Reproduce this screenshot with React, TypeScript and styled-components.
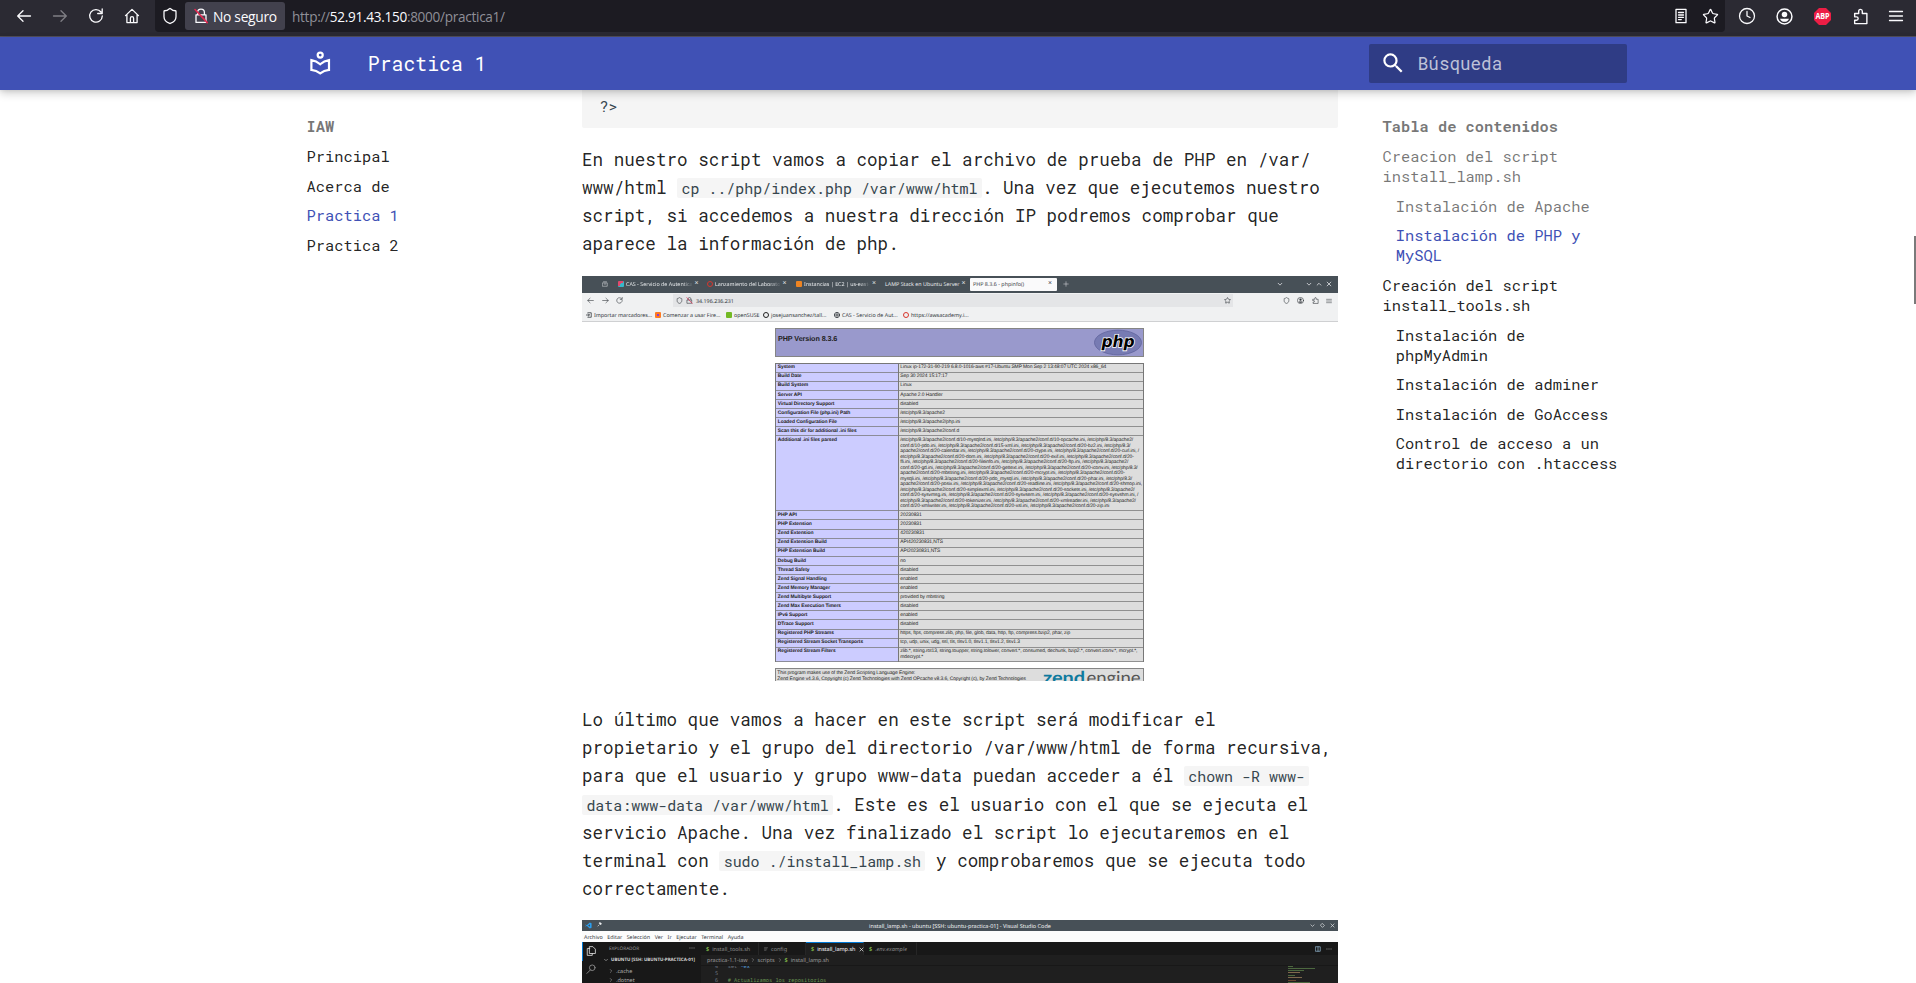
import React from "react";
import styled, { createGlobalStyle, css } from "styled-components";
import { Shield, Star, Clock } from "lucide-react";

const mono = `"Roboto Mono", "DejaVu Sans Mono", "Liberation Mono", monospace`;
const ui = `"Open Sans", "Noto Sans", sans-serif`;

const Global = createGlobalStyle`
  * { box-sizing: border-box; }
  body { margin: 0; background: #fff; color: rgba(0,0,0,.87); font-family: ${mono}; overflow: hidden; }
  svg { display: block; flex: none; }
  h1, h2, p, ul { margin: 0; padding: 0; font-weight: 400; }
  ul { list-style: none; }
`;

const Page = styled.div`
  display: flex;
  flex-direction: column;
  height: 983px;
  overflow: hidden;
`;

/* Browser chrome */
const BrowserBar = styled.div`
  display: flex;
  flex: none;
  height: 37px;
  background: #2b2a33;
  border-bottom: 1px solid #53515d;
  color: #fbfbfe;
  font-family: ${ui};
`;
const NavButtons = styled.div`
  display: flex;
  width: 155px;
  height: 27px;
  padding-left: 6px;
`;
const BarIcon = styled.span<{ $w?: number; $dim?: boolean }>`
  display: flex;
  align-items: center;
  justify-content: center;
  width: ${(p) => p.$w ?? 36}px;
  height: 27px;
  margin-top: 2.5px;
  opacity: ${(p) => (p.$dim ? 0.4 : 1)};
`;
const UrlBox = styled.div`
  display: flex;
  width: 1570px;
  height: 32px;
  background: #1c1b22;
  border-radius: 0 0 4px 4px;
`;
const Chip = styled.span`
  display: flex;
  align-items: center;
  gap: 4px;
  width: 100px;
  height: 28px;
  margin-top: 2px;
  padding-left: 8px;
  background: #42414d;
  border-radius: 3px;
  font-size: 13.8px;
  letter-spacing: -0.3px;
  white-space: nowrap;
`;
const Url = styled.span`
  flex: 1;
  padding: 2px 0 0 7px;
  font-size: 13.6px;
  line-height: 30px;
  letter-spacing: -0.3px;
  color: #8f8f97;
  b { font-weight: 400; color: #fbfbfe; }
`;
const BarRight = styled.div`
  display: flex;
  padding-left: 4px;
`;

/* Site header */
const Header = styled.header`
  position: relative;
  z-index: 2;
  display: flex;
  flex: none;
  align-items: center;
  height: 53px;
  padding-left: 307px;
  background: #4051b5;
  color: #fff;
  box-shadow: 0 0 4.4px rgba(0,0,0,.1), 0 4.4px 8.8px rgba(0,0,0,.2);
`;
const Title = styled.h1`
  width: 1001.6px;
  margin-left: 34.4px;
  padding-bottom: 2px;
  font-size: 19.8px;
`;
const Search = styled.div`
  display: flex;
  align-items: center;
  gap: 11px;
  width: 258px;
  height: 39px;
  padding-left: 11px;
  border-radius: 2px;
  background: #2f3c85;
  color: rgba(255,255,255,.7);
  font-size: 17.6px;
`;

/* Columns */
const Columns = styled.div`
  display: flex;
  flex: 1;
  min-height: 0;
  overflow: hidden;
`;
const Nav = styled.nav<{ $w: number; $left: number }>`
  flex: none;
  width: ${(p) => p.$w}px;
  padding: 26.4px 0 0 ${(p) => p.$left}px;
  font-size: 15.4px;
  line-height: 20.02px;
`;
const NavTitle = styled.h2`
  font-size: 15.4px;
  font-weight: 700;
  color: rgba(0,0,0,.54);
`;
const NavItem = styled.li<{ $tone?: "active" | "passed"; $nested?: boolean }>`
  margin-top: 9.62px;
  padding-left: ${(p) => (p.$nested ? 13.2 : 0)}px;
  white-space: pre-line;
  color: ${(p) => (p.$tone === "active" ? "#4051b5" : p.$tone === "passed" ? "rgba(0,0,0,.54)" : "inherit")};
`;
const Article = styled.article`
  flex: none;
  width: 756px;
  font-size: 17.6px;
  line-height: 28.16px;
`;
const CodeBlock = styled.pre`
  height: 38.2px;
  margin: 0;
  padding: 6px 0 0 17.6px;
  border-radius: 0 0 2px 2px;
  background: #f5f5f5;
  color: #36464e;
  font-family: ${mono};
  font-size: 14.96px;
  line-height: 21px;
`;
const Paragraph = styled.p`
  margin: 17.6px 0;
  white-space: pre;
`;
const Code = styled.code`
  padding: 0 4.4px;
  border-radius: 2px;
  background: #f5f5f5;
  color: #36464e;
  font-family: ${mono};
  font-size: 14.96px;
`;
const ScrollThumb = styled.div`
  width: 2px;
  height: 68px;
  margin: 146px 0 0 auto;
  background: #7a7a7a;
`;

/* Firefox capture */
const Shot = styled.figure<{ $h: number; $gap?: number }>`
  display: flex;
  flex-direction: column;
  width: 756px;
  height: ${(p) => p.$h}px;
  margin: -0.4px 0 ${(p) => p.$gap ?? 0}px;
  overflow: hidden;
  font-family: "Noto Sans", sans-serif;
  font-size: 5.35px;
  line-height: 8px;
  text-rendering: geometricPrecision;
  color: #2e3338;
  white-space: nowrap;
`;
const TabStrip = styled.div`
  display: flex;
  flex: none;
  height: 17px;
  background: #475057;
  color: #e8eaec;
`;
const Tab = styled.div<{ $w: number; $on?: boolean; $px?: number }>`
  display: flex;
  flex: none;
  align-items: center;
  gap: 2px;
  width: ${(p) => p.$w}px;
  height: ${(p) => (p.$on ? 13 : 17)}px;
  margin-top: ${(p) => (p.$on ? 2 : 0)}px;
  padding: 0 5px 0 ${(p) => p.$px ?? 4}px;
  border-radius: 1px;
  ${(p) => p.$on && css`background: #fafafb; color: #3b4045;`}
  i { margin-left: auto; font-style: normal; font-size: 7px; }
`;
const TabText = styled.span<{ $fade?: boolean }>`
  ${(p) => p.$fade && css`mask-image: linear-gradient(90deg, #000 84%, transparent);`}
`;
const Pip = styled.span<{ $c: string; $ring?: boolean }>`
  flex: none;
  width: 6px;
  height: 6px;
  border-radius: ${(p) => (p.$ring ? "50%" : "1px")};
  ${(p) => (p.$ring ? css`border: 1px solid ${p.$c};` : css`background: ${p.$c};`)}
`;
const FoxRow = styled.div<{ $h: number }>`
  display: flex;
  flex: none;
  align-items: center;
  height: ${(p) => p.$h}px;
  background: #f0f1f2;
`;
const FoxNav = styled.span`
  display: flex;
  gap: 7.5px;
  width: 91px;
  padding-left: 5px;
`;
const FoxTools = styled.span`
  display: flex;
  align-items: center;
  gap: 7.3px;
  padding-left: 50px;
`;
const Address = styled.div`
  display: flex;
  align-items: center;
  gap: 3px;
  width: 560px;
  height: 13px;
  padding: 0 2.5px 0 3px;
  background: #e4e5e7;
  svg:last-child { margin-left: auto; }
`;
const Bookmark = styled.span<{ $w: number }>`
  display: flex;
  align-items: center;
  gap: 2px;
  width: ${(p) => p.$w}px;
`;
const FoxPage = styled.div`
  display: flex;
  flex: 1;
  flex-direction: column;
  align-items: flex-start;
  min-height: 0;
  padding: 6px 0 0 193px;
  border-top: 1px solid #cfd0d2;
  background: #fff;
  color: #222;
  font-family: "Liberation Sans", sans-serif;
  font-size: 4.95px;
  line-height: 5.53px;
  letter-spacing: -0.08px;
`;
const Box = styled.div<{ $h: number; $bg: string; $mb?: number }>`
  display: flex;
  flex: none;
  justify-content: space-between;
  width: 369px;
  height: ${(p) => p.$h}px;
  margin-bottom: ${(p) => p.$mb ?? 0}px;
  border: 1px solid #858585;
  background: ${(p) => p.$bg};
`;
const PhpTitle = styled.strong`
  padding: 6px 0 0 2px;
  font-size: 7.2px;
  line-height: 8px;
`;
const InfoTable = styled.div`
  display: grid;
  flex: none;
  width: 369px;
  border: solid #777;
  border-width: 1px 1px 0;
  margin-bottom: 6px;
`;
const InfoRow = styled.div<{ $h: number }>`
  display: grid;
  grid-template-columns: 122px 1fr;
  height: ${(p) => p.$h}px;
  background: linear-gradient(90deg, #ccccff 122px, #dddddd 122px);
  box-shadow: inset 0 -0.8px #777;
  > * { padding: 1.7px 0 0 1.8px; white-space: pre; }
  > :last-child { border-left: 1px solid #777; padding-left: 1.3px; }
`;
const Credits = styled.div`
  padding: 2px 0 0 1.3px;
`;

/* VS Code capture */
const VsTitle = styled.div`
  display: grid;
  grid-template-columns: 1fr auto 1fr;
  flex: none;
  align-items: center;
  height: 11px;
  padding: 0 3px;
  background: #475057;
  color: #f0f2f3;
  font-size: 5.5px;
  > span { display: flex; gap: 5px; }
  > span:last-child { justify-content: flex-end; }
`;
const VsMenu = styled.div`
  display: flex;
  flex: none;
  align-items: center;
  gap: 4.6px;
  height: 11px;
  padding-left: 2px;
  background: #fcfcfc;
`;
const VsBody = styled.div`
  display: flex;
  flex: 1;
  min-height: 0;
  background: #1f1f1f;
  color: #9d9d9d;
  font-size: 5.5px;
`;
const VsActivity = styled.div`
  display: flex;
  flex: none;
  flex-direction: column;
  gap: 8px;
  width: 20px;
  padding: 4px 0 0 4px;
  background: linear-gradient(#0078d4, #0078d4) 0 0 / 1px 19px no-repeat #181818;
`;
const VsTree = styled.div`
  flex: none;
  width: 99px;
  background: #181818;
  padding: 3px 6px 0 2px;
`;
const TreeRow = styled.div<{ $pad: number; $bold?: boolean }>`
  display: flex;
  align-items: center;
  gap: 3px;
  height: ${(p) => (p.$bold ? 13 : 9)}px;
  padding-left: ${(p) => p.$pad}px;
  color: ${(p) => (p.$bold ? "#d8d8d8" : "#b0b0b0")};
  font-size: ${(p) => (p.$bold ? 4.5 : 5.5)}px;
  font-weight: ${(p) => (p.$bold ? 700 : 400)};
`;
const TreeHead = styled.div`
  display: flex;
  justify-content: space-between;
  padding-left: 5px;
  font-size: 4.7px;
`;
const VsEditor = styled.div`
  flex: 1;
  min-width: 0;
`;
const VsTabs = styled.div`
  display: flex;
  height: 13px;
  background: #181818;
`;
const VsTab = styled.span<{ $w: number; $on?: boolean }>`
  display: flex;
  flex: none;
  align-items: center;
  gap: 3px;
  width: ${(p) => p.$w}px;
  padding-left: 5px;
  border-right: 1px solid #262626;
  border-top: 1px solid ${(p) => (p.$on ? "#0078d4" : "transparent")};
  background: ${(p) => (p.$on ? "#1f1f1f" : "none")};
  color: ${(p) => (p.$on ? "#fff" : "#8c8c8c")};
  b { color: #7fb548; font-weight: 700; }
`;
const VsTools = styled.span`
  display: flex;
  align-items: center;
  gap: 5px;
  margin-left: auto;
  padding-right: 6px;
`;
const Crumbs = styled.div`
  display: flex;
  align-items: center;
  gap: 3px;
  height: 10px;
  padding-left: 6px;
  b { color: #7fb548; }
`;
const CodeArea = styled.div`
  display: flex;
  height: 18px;
  overflow: hidden;
  border-top: 1px solid #181818;
`;
const CodeLines = styled.pre`
  flex: 1;
  margin: -3px 0 0;
  padding-left: 14px;
  font-family: "Noto Sans Mono", "DejaVu Sans Mono", monospace;
  font-size: 5.3px;
  line-height: 7px;
  color: #6e7681;
  em { font-style: normal; color: #6a9955; }
  s { text-decoration: none; color: #569cd6; }
`;
const Minimap = styled.svg`
  margin-right: 10px;
`;

const Ico = ({ size = 16, sw = 1.3, children }: { size?: number; sw?: number; children: React.ReactNode }) => (
  <svg width={size} height={size} viewBox="0 0 16 16" fill="none" stroke="currentColor" strokeWidth={sw} strokeLinecap="round" strokeLinejoin="round">
    {children}
  </svg>
);
const Back = ({ size }: { size?: number }) => <Ico size={size}><path d="M14.5 8H1.8M7 2.8 1.7 8 7 13.2" /></Ico>;
const Forward = ({ size }: { size?: number }) => <Ico size={size}><path d="M1.5 8h12.7M9 2.8 14.3 8 9 13.2" /></Ico>;
const Reload = ({ size }: { size?: number }) => (
  <Ico size={size}><path d="M13 4A6.3 6.3 0 1 0 14.3 8M14.2 1v4.5H9.7" /></Ico>
);
const Home = () => <Ico><path d="M1.5 7.6 8 1.4l6.5 6.2M2.9 6.6v8h10.2v-8M6.4 14.4v-4.2a1.6 1.6 0 0 1 3.2 0v4.2" /></Ico>;
const Lock = ({ size = 16 }: { size?: number }) => (
  <Ico size={size}>
    <path d="M4.6 6.5V4.6a3.4 3.4 0 0 1 6.8 0v1.9M3 6.8h10v7.6H3z" />
    <path d="M2 1.5 14.2 14.6" stroke="#e22850" strokeWidth="1.6" />
  </Ico>
);
const Reader = () => <Ico><path d="M3 1.3h10v13.4H3zM5.5 4.5h5M5.5 7h5M5.5 9.3h5M5.5 11.6h2.8" /></Ico>;
const Account = ({ size = 17 }: { size?: number }) => (
  <Ico size={size} sw={1.4}>
    <circle cx="8" cy="8" r="7" />
    <circle cx="8" cy="6.2" r="2.6" fill="currentColor" stroke="none" />
    <path d="M3.8 10h8.4c-.5 1.8-2.1 3-4.2 3s-3.7-1.2-4.2-3z" fill="currentColor" stroke="none" />
  </Ico>
);
const Puzzle = ({ size = 17 }: { size?: number }) => (
  <Ico size={size}><path d="M2.5 5.2h3.8V3a1.7 1.7 0 0 1 3.400 0v2.200H14v9.500H2.500v-3.200h1.700a1.500 1.500 0 0 0 0-3.200H2.500z" /></Ico>
);
const Menu = ({ size = 16 }: { size?: number }) => <Ico size={size}><path d="M1.5 3.5h13M1.5 8h13M1.5 12.5h13" /></Ico>;
const Abp = () => (
  <svg width="17" height="17" viewBox="0 0 17 17">
    <path d="M5 0h7l5 5v7l-5 5H5l-5-5V5z" fill="#ed1e45" />
    <text x="1.4" y="11.4" fontSize="8" fontWeight="700" fill="#fff" textLength="14.2" lengthAdjust="spacingAndGlyphs" fontFamily="Open Sans">ABP</text>
  </svg>
);
const Logo = () => (
  <svg width="26.4" height="26.4" viewBox="0 0 24 24" fill="none" stroke="#fff" strokeWidth="2">
    <circle cx="12" cy="4.6" r="2.3" />
    <path d="M4 9.2c3 .4 5.8 1.800 8 3.800 2.200-2 5-3.400 8-3.800v8.900c-3 .3-5.800 1.400-8 3.100-2.200-1.700-5-2.800-8-3.100z" />
  </svg>
);
const Magnifier = () => (
  <svg width="26.4" height="26.4" viewBox="0 0 24 24" fill="#fff">
    <path d="M9.5 3A6.5 6.5 0 0 1 16 9.500c0 1.610-.590 3.090-1.560 4.230l.270.270h.790l5 5-1.500 1.500-5-5v-.790l-.270-.270A6.516 6.516 0 0 1 9.500 16 6.500 6.500 0 0 1 3 9.500 6.500 6.500 0 0 1 9.500 3m0 2C7 5 5 7 5 9.500S7 14 9.500 14 14 12 14 9.500 12 5 9.500 5Z" />
  </svg>
);
const PhpLogo = () => (
  <svg width="50" height="27" viewBox="0 0 50 27">
    <ellipse cx="25" cy="13.5" rx="23.5" ry="12.3" fill="#777bb3" stroke="#5f639c" strokeWidth="0.8" />
    <text x="8.5" y="17.5" fontFamily="DejaVu Sans" fontWeight="700" fontStyle="italic" fontSize="16" textLength="33" lengthAdjust="spacingAndGlyphs" fill="#000" stroke="#fff" strokeWidth="1.6" paintOrder="stroke">php</text>
  </svg>
);
const ZendLogo = () => (
  <svg width="102" height="24" viewBox="0 0 102 24">
    <text x="2" y="15" fontFamily="Lato" fontSize="18" textLength="42" lengthAdjust="spacingAndGlyphs" fontWeight="700" fill="#0e7a9e">zend</text>
    <text x="45.5" y="15" fontFamily="Lato" fontSize="18" textLength="54" lengthAdjust="spacingAndGlyphs" fill="#555">engine</text>
  </svg>
);
const ChevronDown = ({ size = 6 }: { size?: number }) => <Ico size={size} sw={2}><path d="m3 6 5 5 5-5" /></Ico>;
const ChevronRight = () => <Ico size={4} sw={2}><path d="m5 2 6 6-6 6" /></Ico>;
const Cross = ({ size = 6 }: { size?: number }) => <Ico size={size} sw={2}><path d="m3 3 10 10M13 3 3 13" /></Ico>;
const Dots = () => <Ico size={6} sw={2}><path d="M2 8h1M7.5 8h1M13 8h1" /></Ico>;

type Row = [string, string, number?];
const iniFiles = `/etc/php/8.3/apache2/conf.d/10-mysqlnd.ini, /etc/php/8.3/apache2/conf.d/10-opcache.ini, /etc/php/8.3/apache2/
conf.d/10-pdo.ini, /etc/php/8.3/apache2/conf.d/15-xml.ini, /etc/php/8.3/apache2/conf.d/20-bz2.ini, /etc/php/8.3/
apache2/conf.d/20-calendar.ini, /etc/php/8.3/apache2/conf.d/20-ctype.ini, /etc/php/8.3/apache2/conf.d/20-curl.ini, /
etc/php/8.3/apache2/conf.d/20-dom.ini, /etc/php/8.3/apache2/conf.d/20-exif.ini, /etc/php/8.3/apache2/conf.d/20-
ffi.ini, /etc/php/8.3/apache2/conf.d/20-fileinfo.ini, /etc/php/8.3/apache2/conf.d/20-ftp.ini, /etc/php/8.3/apache2/
conf.d/20-gd.ini, /etc/php/8.3/apache2/conf.d/20-gettext.ini, /etc/php/8.3/apache2/conf.d/20-iconv.ini, /etc/php/8.3/
apache2/conf.d/20-mbstring.ini, /etc/php/8.3/apache2/conf.d/20-mcrypt.ini, /etc/php/8.3/apache2/conf.d/20-
mysqli.ini, /etc/php/8.3/apache2/conf.d/20-pdo_mysql.ini, /etc/php/8.3/apache2/conf.d/20-phar.ini, /etc/php/8.3/
apache2/conf.d/20-posix.ini, /etc/php/8.3/apache2/conf.d/20-readline.ini, /etc/php/8.3/apache2/conf.d/20-shmop.ini,
/etc/php/8.3/apache2/conf.d/20-simplexml.ini, /etc/php/8.3/apache2/conf.d/20-sockets.ini, /etc/php/8.3/apache2/
conf.d/20-sysvmsg.ini, /etc/php/8.3/apache2/conf.d/20-sysvsem.ini, /etc/php/8.3/apache2/conf.d/20-sysvshm.ini, /
etc/php/8.3/apache2/conf.d/20-tokenizer.ini, /etc/php/8.3/apache2/conf.d/20-xmlreader.ini, /etc/php/8.3/apache2/
conf.d/20-xmlwriter.ini, /etc/php/8.3/apache2/conf.d/20-xsl.ini, /etc/php/8.3/apache2/conf.d/20-zip.ini`;
const rows: Row[] = [
  ["System", "Linux ip-172-31-90-219 6.8.0-1016-aws #17-Ubuntu SMP Mon Sep 2 13:48:07 UTC 2024 x86_64"],
  ["Build Date", "Sep 30 2024 15:17:17"],
  ["Build System", "Linux"],
  ["Server API", "Apache 2.0 Handler"],
  ["Virtual Directory Support", "disabled"],
  ["Configuration File (php.ini) Path", "/etc/php/8.3/apache2"],
  ["Loaded Configuration File", "/etc/php/8.3/apache2/php.ini"],
  ["Scan this dir for additional .ini files", "/etc/php/8.3/apache2/conf.d"],
  ["Additional .ini files parsed", iniFiles, 75],
  ["PHP API", "20230831"],
  ["PHP Extension", "20230831"],
  ["Zend Extension", "420230831"],
  ["Zend Extension Build", "API420230831,NTS"],
  ["PHP Extension Build", "API20230831,NTS"],
  ["Debug Build", "no"],
  ["Thread Safety", "disabled"],
  ["Zend Signal Handling", "enabled"],
  ["Zend Memory Manager", "enabled"],
  ["Zend Multibyte Support", "provided by mbstring"],
  ["Zend Max Execution Timers", "disabled"],
  ["IPv6 Support", "enabled"],
  ["DTrace Support", "disabled"],
  ["Registered PHP Streams", "https, ftps, compress.zlib, php, file, glob, data, http, ftp, compress.bzip2, phar, zip"],
  ["Registered Stream Socket Transports", "tcp, udp, unix, udg, ssl, tls, tlsv1.0, tlsv1.1, tlsv1.2, tlsv1.3"],
  ["Registered Stream Filters", "zlib.*, string.rot13, string.toupper, string.tolower, convert.*, consumed, dechunk, bzip2.*, convert.iconv.*, mcrypt.*,\nmdecrypt.*", 14.6],
];

const FirefoxShot = () => (
  <Shot $h={405} $gap={25.5}>
    <TabStrip>
      <Tab $w={32} $px={20}><Ico size={6}><path d="M2 5h12v9H2zM4 2h8M6 8h4" /></Ico></Tab>
      <Tab $w={89}><Pip $c="linear-gradient(135deg,#e2486c 50%,#39b6c8 50%)" /><TabText $fade>CAS - Servicio de Autentica</TabText><i>×</i></Tab>
      <Tab $w={88}><Pip $c="#d8362d" $ring /><TabText $fade>Lanzamiento del Laborato</TabText><i>×</i></Tab>
      <Tab $w={89} $px={5}><Pip $c="#ee8422" /><TabText $fade>Instancias | EC2 | us-east-</TabText><i>×</i></Tab>
      <Tab $w={90} $px={5}><TabText>LAMP Stack en Ubuntu Server</TabText><i>×</i></Tab>
      <Tab $w={87} $px={3} $on><TabText>PHP 8.3.6 - phpinfo()</TabText><i>×</i></Tab>
      <Tab $w={220} $px={6}><Ico size={6}><path d="M8 2v12M2 8h12" /></Ico></Tab>
      <Tab $w={29} $px={0}><ChevronDown /></Tab>
      <Tab $w={32} $px={0}>
        <ChevronDown /><span />
        <Ico size={6} sw={2}><path d="m3 11 5-5 5 5" /></Ico><span />
        <Cross />
      </Tab>
    </TabStrip>
    <FoxRow $h={16}>
      <FoxNav><Back size={7} /><Forward size={7} /><Reload size={7} /></FoxNav>
      <Address><Shield size={7} strokeWidth={2} /><Lock size={7} /><span>34.196.236.231</span><Star size={7} /></Address>
      <FoxTools><Shield size={7} /><Account size={7} /><Puzzle size={7} /><Menu size={6} /></FoxTools>
    </FoxRow>
    <FoxRow $h={12}>
      <Bookmark $w={4} />
      <Bookmark $w={69}><Ico size={6} sw={2}><path d="M5 2h9v12H5M1 8h8M6 5l3 3-3 3" /></Ico>Importar marcadores...</Bookmark>
      <Bookmark $w={71}><Pip $c="radial-gradient(circle,#8a3bd8 30%,#ff7b22 35%)" />Comenzar a usar Fire...</Bookmark>
      <Bookmark $w={37}><Pip $c="#73ba25" />openSUSE</Bookmark>
      <Bookmark $w={71}><Pip $c="#222" $ring />josejuansanchez/tall...</Bookmark>
      <Bookmark $w={69}><Ico size={6} sw={2}><circle cx="8" cy="8" r="7" /><path d="M1 8h14M8 1v14" /></Ico>CAS - Servicio de Aut...</Bookmark>
      <Bookmark $w={80}><Pip $c="#d8362d" $ring />https://awsacademy.i...</Bookmark>
    </FoxRow>
    <FoxPage>
      <Box $h={29.5} $bg="#9999cc" $mb={5.5}><PhpTitle>PHP Version 8.3.6</PhpTitle><PhpLogo /></Box>
      <InfoTable>
        {rows.map(([label, value, h]) => (
          <InfoRow key={label} $h={h ?? 9.1}><strong>{label}</strong><span>{value}</span></InfoRow>
        ))}
      </InfoTable>
      <Box $h={24} $bg="#dddddd">
        <Credits>This program makes use of the Zend Scripting Language Engine:<br />Zend Engine v4.3.6, Copyright (c) Zend Technologies with Zend OPcache v8.3.6, Copyright (c), by Zend Technologies</Credits>
        <ZendLogo />
      </Box>
    </FoxPage>
  </Shot>
);

const minimapLines: [number, number, string][] = [
  [0, 5, "#6a9955"], [2, 27, "#6a9955"], [4, 16, "#6a9955"], [6, 12, "#c09a6b"], [9, 7, "#6a9955"], [11, 14, "#c09a6b"], [14, 8, "#9a5f3c"], [16, 22, "#6a9955"],
];

const VsCodeShot = () => (
  <Shot $h={63}>
    <VsTitle>
      <span>
        <svg width="7" height="7" viewBox="0 0 16 16"><path d="M11 1 4 7.5 1.5 5.5.5 6.2 3 8 .5 9.8l1 .7L4 8.500 11 15l4-1.700V2.700zM11.500 5v6L7 8z" fill="#2b9ff0" /></svg>
        <Ico size={5} sw={2}><path d="m3 13 4-4M7 4l5 5 2-4-3-3z" fill="currentColor" /></Ico>
      </span>
      <div>install_lamp.sh - ubuntu [SSH: ubuntu-practica-01] - Visual Studio Code</div>
      <span>
        <ChevronDown size={5} />
        <Ico size={5} sw={2}><path d="m8 2 6 6-6 6-6-6z" /></Ico>
        <Cross size={5} />
      </span>
    </VsTitle>
    <VsMenu>
      {["Archivo", "Editar", "Selección", "Ver", "Ir", "Ejecutar", "Terminal", "Ayuda"].map((m) => <span key={m}>{m}</span>)}
    </VsMenu>
    <VsBody>
      <VsActivity>
        <Ico size={10}><path d="M6 1h5l4 4v7H6zM6 4H2v11h8v-3" stroke="#e0e0e0" /></Ico>
        <Ico size={10}><circle cx="10" cy="6" r="4.5" stroke="#9a9a9a" /><path d="m7 9.5-5.5 5.5" stroke="#9a9a9a" /></Ico>
      </VsActivity>
      <VsTree>
        <TreeHead><span>EXPLORADOR</span><Dots /></TreeHead>
        <TreeRow $pad={0} $bold><Ico size={4} sw={2}><path d="m2 5 6 6 6-6" /></Ico>UBUNTU [SSH: UBUNTU-PRACTICA-01]</TreeRow>
        <TreeRow $pad={5}><ChevronRight />.cache</TreeRow>
        <TreeRow $pad={5}><ChevronRight />.dotnet</TreeRow>
      </VsTree>
      <VsEditor>
        <VsTabs>
          <VsTab $w={58}><b>$</b>install_tools.sh</VsTab>
          <VsTab $w={47}><Ico size={4} sw={2}><path d="M2 3h12M2 8h9M2 13h6" /></Ico>config</VsTab>
          <VsTab $w={58} $on><b>$</b>install_lamp.sh<Cross size={5} /></VsTab>
          <VsTab $w={53}><b>$</b><i>.env.example</i></VsTab>
          <VsTools><Ico size={6} sw={2}><path d="M2 2h12v12H2zM8 2v12" stroke="#8fb0c8" /></Ico><Dots /></VsTools>
        </VsTabs>
        <Crumbs>practica-1.1-iaw<ChevronRight />scripts<ChevronRight /><b>$</b>install_lamp.sh</Crumbs>
        <CodeArea>
          <CodeLines>{"4   set "}<s>-ex</s>{"\n5\n6   "}<em># Actualizamos los repositorios</em></CodeLines>
          <Minimap width="40" height="18">
            {minimapLines.map(([y, w, c]) => <rect key={y} x="0" y={y} width={w} height="1" fill={c} opacity="0.6" />)}
          </Minimap>
        </CodeArea>
      </VsEditor>
    </VsBody>
  </Shot>
);

export default function App() {
  return (
    <Page>
      <Global />
      <BrowserBar>
        <NavButtons>
          <BarIcon><Back /></BarIcon>
          <BarIcon $dim><Forward /></BarIcon>
          <BarIcon><Reload /></BarIcon>
          <BarIcon $w={35}><Home /></BarIcon>
        </NavButtons>
        <UrlBox>
          <BarIcon $w={30}><Shield size={18} strokeWidth={1.7} /></BarIcon>
          <Chip><Lock />No seguro</Chip>
          <Url>http://<b>52.91.43.150</b>:8000/practica1/</Url>
          <BarIcon $w={28}><Reader /></BarIcon>
          <BarIcon $w={30}><Star size={17} strokeWidth={1.7} /></BarIcon>
        </UrlBox>
        <BarRight>
          <BarIcon><Clock size={18} strokeWidth={1.7} /></BarIcon>
          <BarIcon $w={38}><Account /></BarIcon>
          <BarIcon $w={38}><Abp /></BarIcon>
          <BarIcon $w={38}><Puzzle /></BarIcon>
          <BarIcon $w={34}><Menu /></BarIcon>
        </BarRight>
      </BrowserBar>
      <Header>
        <Logo />
        <Title>Practica 1</Title>
        <Search><Magnifier />Búsqueda</Search>
      </Header>
      <Columns>
        <Nav $w={582} $left={306.5}>
          <NavTitle>IAW</NavTitle>
          <ul>
            <NavItem>Principal</NavItem>
            <NavItem>Acerca de</NavItem>
            <NavItem $tone="active">Practica 1</NavItem>
            <NavItem>Practica 2</NavItem>
          </ul>
        </Nav>
        <Article>
          <CodeBlock>?&gt;</CodeBlock>
          <Paragraph>
            {"En nuestro script vamos a copiar el archivo de prueba de PHP en /var/\nwww/html "}
            <Code>cp ../php/index.php /var/www/html</Code>
            {". Una vez que ejecutemos nuestro\nscript, si accedemos a nuestra dirección IP podremos comprobar que\naparece la información de php."}
          </Paragraph>
          <FirefoxShot />
          <Paragraph>
            {"Lo último que vamos a hacer en este script será modificar el\npropietario y el grupo del directorio /var/www/html de forma recursiva,\npara que el usuario y grupo www-data puedan acceder a él "}
            <Code>chown -R www-</Code>
            {"\n"}
            <Code>data:www-data /var/www/html</Code>
            {". Este es el usuario con el que se ejecuta el\nservicio Apache. Una vez finalizado el script lo ejecutaremos en el\nterminal con "}
            <Code>sudo ./install_lamp.sh</Code>
            {" y comprobaremos que se ejecuta todo\ncorrectamente."}
          </Paragraph>
          <VsCodeShot />
        </Article>
        <Nav $w={300} $left={44.5}>
          <NavTitle>Tabla de contenidos</NavTitle>
          <ul>
            <NavItem $tone="passed">{"Creacion del script\ninstall_lamp.sh"}</NavItem>
            <NavItem $nested $tone="passed">Instalación de Apache</NavItem>
            <NavItem $nested $tone="active">{"Instalación de PHP y\nMySQL"}</NavItem>
            <NavItem>{"Creación del script\ninstall_tools.sh"}</NavItem>
            <NavItem $nested>{"Instalación de\nphpMyAdmin"}</NavItem>
            <NavItem $nested>Instalación de adminer</NavItem>
            <NavItem $nested>Instalación de GoAccess</NavItem>
            <NavItem $nested>{"Control de acceso a un\ndirectorio con .htaccess"}</NavItem>
          </ul>
        </Nav>
        <ScrollThumb />
      </Columns>
    </Page>
  );
}
